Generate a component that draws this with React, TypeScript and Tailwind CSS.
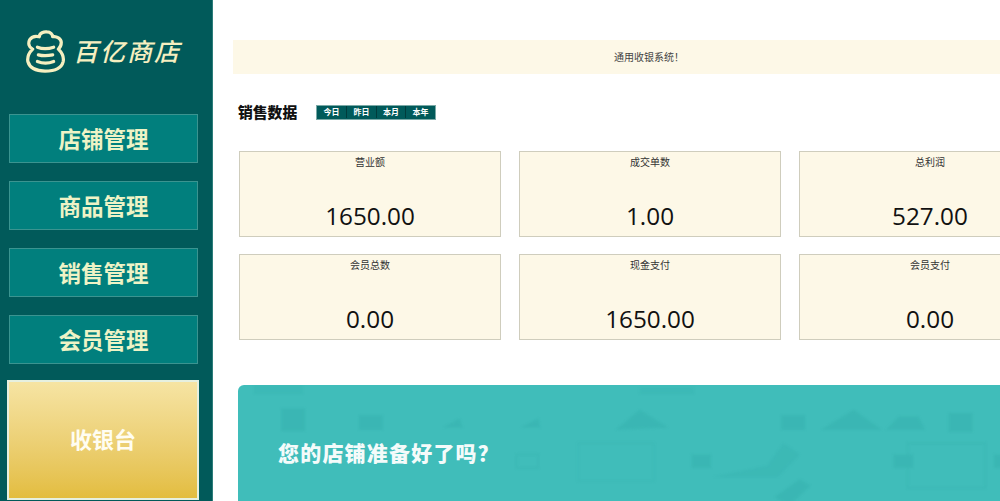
const cjk = "font-['Noto_Sans_CJK_SC','Noto_Sans',sans-serif]";

function Logo() {
  return (
    <svg width="42" height="44" viewBox="0 0 44 46" fill="none" stroke="#f6efc0" strokeWidth="3.4" strokeLinecap="round" strokeLinejoin="round">
      <path d="M15 7 C15 3 20 1.500 23 2 C27 2 29 5 29 7 C33 6 38 9 38 13 C38 17 36 19 35 20 C39 24 41 28 40 33 C38 41 29 43 21 43 C12 43 5 40 3 33 C2 27 5 23 8 20 C4 18 3 14 5 10 C7 7 11 6 15 7 Z" />
      <path d="M13 18 C18 20 24 20 30 18" />
      <path d="M14 26 C18 27 24 27 29 26" />
      <path d="M13 33 C18 35 25 35 30 33" />
    </svg>
  );
}

function NavButton({ label }: { label: string }) {
  return (
    <div className="mr-[14px] ml-[9px] flex h-[49px] items-center justify-center border border-[#3b9490] bg-[#017f7d] pb-[1px] text-[22.5px] leading-none font-bold text-[#eef3c6]">
      {label}
    </div>
  );
}

function Card({ title, value }: { title: string; value: string }) {
  return (
    <div className="flex h-[86px] flex-col items-center border border-[#cfcdbd] bg-[#fdf8e7]">
      <div className="mt-[2px] text-[10px] leading-[16px] text-[#333333]">{title}</div>
      <div className="mt-[29px] font-['Open_Sans',sans-serif] text-[24.3px] leading-[34px] text-[#111111]">{value}</div>
    </div>
  );
}

function Pattern() {
  const c = "#39b5b2";
  return (
    <svg className="absolute inset-0 h-full w-full blur-[1px]" viewBox="0 0 762 116" preserveAspectRatio="none" fill={c} opacity=".75">
      <rect x="15" y="0" width="45" height="8" opacity=".6" />
      <rect x="40" y="21" width="22" height="20" />
      <rect x="112" y="27" width="22" height="13" />
      <path d="M190 38 L205 30 L208 38 Z" />
      <path d="M262 38 L278 30 L280 38 Z" />
      <path d="M350 40 L372 22 L398 38 Z" />
      <rect x="372" y="2" width="50" height="6" opacity=".6" />
      <rect x="258" y="62" width="20" height="12" fill="none" stroke={c} />
      <rect x="503" y="27" width="22" height="13" />
      <path d="M540 40 L570 22 L596 40 Z" />
      <path d="M600 40 L612 28 L630 28 L636 40 Z" />
      <rect x="658" y="25" width="22" height="17" />
      <path d="M440 82 L490 72 L505 52 L520 62 L500 82 Z" opacity=".7" />
      <path d="M497 100 L520 84 L530 90 L510 108 Z" />
      <rect x="420" y="62" width="18" height="12" />
      <rect x="607" y="62" width="18" height="12" />
      <rect x="700" y="62" width="18" height="12" />
      <rect x="620" y="52" width="72" height="40" fill="none" stroke={c} />
      <rect x="315" y="52" width="70" height="34" fill="none" stroke={c} opacity=".6" />
      <rect x="20" y="112" width="50" height="10" />
      <path d="M98 116 H180 L170 140 H108 Z" fill="none" stroke={c} />
      <path d="M420 116 L505 114 L495 140 H435 Z" fill="none" stroke={c} />
      <path d="M620 116 L760 114 L745 140 H635 Z" fill="none" stroke={c} />
    </svg>
  );
}

export default function App() {
  return (
    <div className={`flex h-[501px] w-[1000px] overflow-hidden bg-white ${cjk}`}>
      <aside className="flex h-full w-[213px] shrink-0 flex-col border-r border-[#2c7d7a] bg-[#015a5a]">
        <div className="mt-[29px] flex h-[46px] items-center pl-[25px]">
          <Logo />
          <span className="mb-[3px] ml-[6px] font-['Noto_Sans_CJK_SC',serif] text-[25px] leading-none font-medium tracking-[2px] text-[#f6efc0] italic">百亿商店</span>
        </div>
        <div className="mt-[39px] flex flex-col gap-[18px]">
          <NavButton label="店铺管理" />
          <NavButton label="商品管理" />
          <NavButton label="销售管理" />
          <NavButton label="会员管理" />
        </div>
        <div className="mt-[16px] mr-[13px] ml-[7px] flex h-[120px] items-center justify-center border-2 border-[#e6f0e0] bg-gradient-to-b from-[#f6e4a3] to-[#e3bd3e] pb-[3px] text-[22px] font-bold text-[#fffdf2]">
          收银台
        </div>
      </aside>
      <main className="w-[848px] shrink-0 pt-[40px] pl-[20px]">
        <div className="flex h-[34px] w-[828px] items-center justify-center bg-[#fdf8e7] pb-[2px] pl-[4px] text-[10px] text-[#444444]">
          通用收银系统！
        </div>
        <div className="mt-[31px] ml-[5px] flex h-[15px] items-center">
          <span className="w-[78px] text-[14.8px] leading-none font-black text-[#111111]">销售数据</span>
          <div className="flex h-[15px] border border-[#7aa9a6] bg-[#015a5a] pb-[1px] text-[8px] leading-none font-bold text-white">
            <span className="flex w-[30px] items-center justify-center border-r border-[#013c3c]">今日</span>
            <span className="flex w-[30px] items-center justify-center border-r border-[#013c3c]">昨日</span>
            <span className="flex w-[29px] items-center justify-center border-r border-[#013c3c]">本月</span>
            <span className="flex w-[29px] items-center justify-center">本年</span>
          </div>
        </div>
        <div className="mt-[31px] ml-[6px] grid w-[822px] grid-cols-3 gap-x-[18px] gap-y-[17px]">
          <Card title="营业额" value="1650.00" />
          <Card title="成交单数" value="1.00" />
          <Card title="总利润" value="527.00" />
          <Card title="会员总数" value="0.00" />
          <Card title="现金支付" value="1650.00" />
          <Card title="会员支付" value="0.00" />
        </div>
        <div className="relative mt-[45px] ml-[5px] h-[130px] w-[823px] overflow-hidden rounded-[6px] bg-[#40bdba]">
          <Pattern />
          <div className="relative pt-[53px] pl-[40px] text-[21px] leading-[28px] font-black tracking-[1.2px] text-[#f4fbfa]">
            您的店铺准备好了吗？
          </div>
        </div>
      </main>
    </div>
  );
}
